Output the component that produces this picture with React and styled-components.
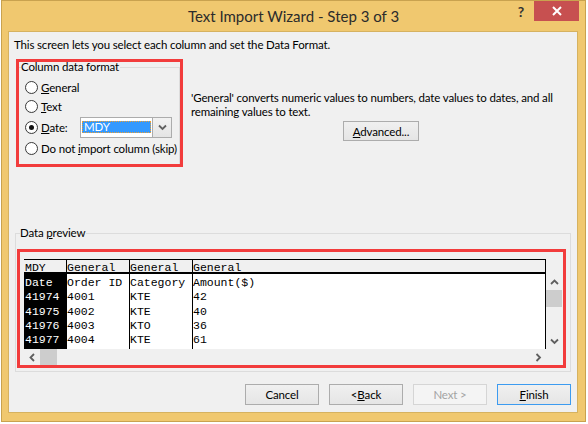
import React from "react";
import styled, { createGlobalStyle } from "styled-components";

const UI_FONT = `"Segoe UI", Lato, "Liberation Sans", sans-serif`;
const MONO = `"Courier New", "Liberation Mono", monospace`;

const GlobalStyle = createGlobalStyle`
  * { box-sizing: border-box; }
  html, body { margin: 0; padding: 0; }
  body {
    width: 588px;
    height: 424px;
    overflow: hidden;
    background: #fff;
    font-family: ${UI_FONT};
    font-size: 11.5px;
    letter-spacing: -0.15px;
    color: #000;
  }
`;

const Window = styled.div`
  width: 585px;
  height: 422px;
  margin-left: 1px;
  background: #f0c86f;
  border: 1px solid #c9a24f;
  display: flex;
  flex-direction: column;
`;

const TitleBar = styled.div`
  height: 30px;
  flex: none;
  display: grid;
  grid-template-columns: 1fr auto 1fr;
  align-items: start;
`;

const Title = styled.div`
  grid-column: 2;
  line-height: 30px;
  font-size: 15px;
  letter-spacing: 0;
  color: #2b2b2b;
  white-space: nowrap;
`;

const Controls = styled.div`
  grid-column: 3;
  justify-self: end;
  display: flex;
  align-items: flex-start;
  margin-right: 6px;
`;

const HelpGlyph = styled.span`
  font-weight: bold;
  font-size: 14px;
  line-height: 22px;
  color: #333;
  margin-right: 10px;
`;

const CloseButton = styled.div`
  width: 45px;
  height: 20px;
  background: #c75050;
  display: flex;
  align-items: center;
  justify-content: center;
`;

const Panel = styled.div`
  flex: 1;
  margin: 0 7px 8px 6px;
  background: #f0f0f0;
  border: 1px solid #d6b260;
  display: flex;
  flex-direction: column;
`;

const Intro = styled.div`
  margin: 5px 0 0 5px;
  line-height: 15px;
`;

const Middle = styled.div`
  display: flex;
  margin: 7px 0 0 7px;
  height: 108px;
`;

const Highlight = styled.div`
  border: 3px solid #f23c3c;
  flex: none;
`;

const FormatHighlight = styled(Highlight)`
  width: 167px;
  height: 108px;
`;

const FormatGroup = styled.fieldset`
  margin: 0;
  padding: 0 0 0 2px;
  min-width: 0;
  height: 100%;
  border: 1px solid #dcdcdc;
  border-left: 0;
  border-bottom: 0;
`;

const Legend = styled.legend`
  padding: 0 1px 0 0;
  margin-left: ${(p) => p.$indent || 0}px;
  line-height: ${(p) => p.$lh || 12}px;
`;

const OptionList = styled.div`
  margin: 6px 0 0 4px;
  display: flex;
  flex-direction: column;
`;

const OptionRow = styled.div`
  display: flex;
  align-items: center;
  gap: 3px;
  height: ${(p) => (p.$tall ? 23 : 19)}px;
  white-space: nowrap;
`;

const Radio = styled.span`
  width: 13px;
  height: 13px;
  flex: none;
  border-radius: 50%;
  border: 1px solid #3a3a3a;
  background: radial-gradient(circle at 50% 40%, #fff 55%, #ececec);
  display: inline-flex;
  align-items: center;
  justify-content: center;

  &::after {
    content: "";
    width: 5px;
    height: 5px;
    border-radius: 50%;
    background: ${(p) => (p.$checked ? "#111" : "transparent")};
  }
`;

const DateLabel = styled.span`
  width: 36px;
`;

const Combo = styled.div`
  width: 92px;
  height: 21px;
  border: 1px solid #acacac;
  background: #fff;
  display: flex;
`;

const ComboField = styled.div`
  flex: 1;
  padding: 3px 1px 4px 1px;
`;

const ComboValue = styled.div`
  height: 12px;
  line-height: 12px;
  padding-left: 2px;
  background: #3399ff;
  color: #fff;
  outline: 1px dotted #f0a030;
  outline-offset: -1px;
`;

const ComboButton = styled.div`
  width: 19px;
  border-left: 1px solid #acacac;
  background: linear-gradient(#f2f2f2, #e4e4e4);
  display: flex;
  align-items: center;
  justify-content: center;
`;

const Description = styled.div`
  width: 380px;
  margin-left: 8px;
  display: flex;
  flex-direction: column;
`;

const DescText = styled.p`
  margin: 32px 0 0;
  line-height: 14px;
`;

const PushButton = styled.div`
  width: ${(p) => p.$w || 74}px;
  height: ${(p) => p.$h || 21}px;
  border: 1px solid ${(p) => (p.$default ? "#3c9bf0" : p.$disabled ? "#d5d5d5" : "#acacac")};
  background: ${(p) => (p.$disabled ? "#f4f4f4" : "linear-gradient(#f0f0f0, #e5e5e5)")};
  color: ${(p) => (p.$disabled ? "#a3a3a3" : "#000")};
  display: flex;
  align-items: center;
  justify-content: center;
  white-space: nowrap;
`;

const AdvancedButton = styled(PushButton)`
  margin-top: 2px;
  align-self: center;
`;

const PreviewGroup = styled.fieldset`
  margin: 60px 0 0 6px;
  width: 556px;
  min-width: 0;
  padding: 10px 4px 3px 1px;
  border: 1px solid #dcdcdc;
`;

const PreviewHighlight = styled(Highlight)`
  width: 549px;
  height: 119px;
`;

const Grid = styled.div`
  margin: 7px 1px 0 4px;
  height: 106px;
  display: grid;
  grid-template-columns: 522px 16px;
  grid-template-rows: 15px 75px 16px;
  font-family: ${MONO};
  font-size: 11.5px;
  letter-spacing: 0;
`;

const Columns = styled.div`
  grid-row: 1 / span 2;
  grid-column: 1;
  display: flex;
`;

const Column = styled.div`
  width: ${(p) => p.$w}px;
  flex: none;
  display: flex;
  flex-direction: column;
  border-left: ${(p) => (p.$first ? "0" : "1px solid #000")};
  border-right: ${(p) => (p.$last ? "1px solid #000" : "0")};
`;

const HeaderCell = styled.div`
  height: 15px;
  flex: none;
  border-top: 1px solid #000;
  border-bottom: 2px solid #000;
  background: #f0f0f0;
  padding: 2px 0 0 ${(p) => (p.$first ? 1 : 0)}px;
  line-height: 12px;
  white-space: pre;
`;

const BodyCells = styled.div`
  flex: 1;
  padding: 2px 0 0 ${(p) => (p.$selected ? 1 : 0)}px;
  background: ${(p) => (p.$selected ? "#000" : "#fff")};
  color: ${(p) => (p.$selected ? "#fff" : "#000")};
`;

const Cell = styled.div`
  line-height: 14.25px;
  white-space: pre;
`;

const VScroll = styled.div`
  grid-row: 2;
  grid-column: 2;
  display: flex;
  flex-direction: column;
  background: #f0f0f0;
`;

const HScroll = styled.div`
  grid-row: 3;
  grid-column: 1;
  display: flex;
  background: #f0f0f0;
`;

const ArrowBox = styled.div`
  width: 16px;
  height: 16px;
  flex: none;
  display: flex;
  align-items: center;
  justify-content: center;
`;

const Track = styled.div`
  flex: 1;
  display: flex;
  flex-direction: ${(p) => (p.$vertical ? "column" : "row")};
`;

const Thumb = styled.div`
  background: #cdcdcd;
  width: ${(p) => (p.$vertical ? "100%" : "17px")};
  height: ${(p) => (p.$vertical ? "17px" : "100%")};
`;

const ButtonRow = styled.div`
  display: flex;
  justify-content: flex-end;
  gap: 10px;
  margin: 12px 6px 0 0;
`;

const Chevron = ({ dir, color = "#5f5f5f" }) => {
  const pts = {
    up: "1,6 4.5,2.5 8,6",
    down: "1,2.5 4.5,6 8,2.5",
    left: "6,1 2.5,4.5 6,8",
    right: "2.5,1 6,4.5 2.5,8",
  }[dir];
  return (
    <svg width="9" height="9" viewBox="0 0 9 9">
      <polyline points={pts} fill="none" stroke={color} strokeWidth="1.8" />
    </svg>
  );
};

const columns = [
  { w: 42, head: "MDY", cells: ["Date", "41974", "41975", "41976", "41977"], selected: true },
  { w: 63, head: "General", cells: ["Order ID", "4001", "4002", "4003", "4004"] },
  { w: 63, head: "General", cells: ["Category", "KTE", "KTE", "KTO", "KTE"] },
  { w: 354, head: "General", cells: ["Amount($)", "42", "40", "36", "61"] },
];

export default function App() {
  return (
    <>
      <GlobalStyle />
      <Window>
        <TitleBar>
          <Title>Text Import Wizard - Step 3 of 3</Title>
          <Controls>
            <HelpGlyph>?</HelpGlyph>
            <CloseButton>
              <svg width="10" height="10" viewBox="0 0 10 10">
                <path d="M1 1L9 9M9 1L1 9" stroke="#fff" strokeWidth="2" />
              </svg>
            </CloseButton>
          </Controls>
        </TitleBar>

        <Panel>
          <Intro>This screen lets you select each column and set the Data Format.</Intro>

          <Middle>
            <FormatHighlight>
              <FormatGroup>
                <Legend $lh={10}>Column data format</Legend>
                <OptionList>
                  <OptionRow>
                    <Radio />
                    <span><u>G</u>eneral</span>
                  </OptionRow>
                  <OptionRow>
                    <Radio />
                    <span><u>T</u>ext</span>
                  </OptionRow>
                  <OptionRow $tall>
                    <Radio $checked />
                    <DateLabel><u>D</u>ate:</DateLabel>
                    <Combo>
                      <ComboField>
                        <ComboValue>MDY</ComboValue>
                      </ComboField>
                      <ComboButton>
                        <Chevron dir="down" color="#606060" />
                      </ComboButton>
                    </Combo>
                  </OptionRow>
                  <OptionRow>
                    <Radio />
                    <span>Do not <u>i</u>mport column (skip)</span>
                  </OptionRow>
                </OptionList>
              </FormatGroup>
            </FormatHighlight>

            <Description>
              <DescText>
                'General' converts numeric values to numbers, date values to dates, and all
                remaining values to text.
              </DescText>
              <AdvancedButton $w={76} $h={20}>
                <span><u>A</u>dvanced...</span>
              </AdvancedButton>
            </Description>
          </Middle>

          <PreviewGroup>
            <Legend $indent={3}>Data <u>p</u>review</Legend>
            <PreviewHighlight>
              <Grid>
                <Columns>
                  {columns.map((col, i) => (
                    <Column
                      key={i}
                      $w={col.w}
                      $first={i === 0}
                      $last={i === columns.length - 1}
                    >
                      <HeaderCell $first={i === 0}>{col.head}</HeaderCell>
                      <BodyCells $selected={col.selected}>
                        {col.cells.map((c, j) => (
                          <Cell key={j}>{c}</Cell>
                        ))}
                      </BodyCells>
                    </Column>
                  ))}
                </Columns>
                <VScroll>
                  <ArrowBox><Chevron dir="up" /></ArrowBox>
                  <Track $vertical>
                    <Thumb $vertical />
                  </Track>
                  <ArrowBox><Chevron dir="down" /></ArrowBox>
                </VScroll>
                <HScroll>
                  <ArrowBox><Chevron dir="left" /></ArrowBox>
                  <Track>
                    <Thumb />
                  </Track>
                  <ArrowBox><Chevron dir="right" /></ArrowBox>
                </HScroll>
              </Grid>
            </PreviewHighlight>
          </PreviewGroup>

          <ButtonRow>
            <PushButton>Cancel</PushButton>
            <PushButton>&lt; <u>B</u>ack</PushButton>
            <PushButton $disabled>Next &gt;</PushButton>
            <PushButton $default><span><u>F</u>inish</span></PushButton>
          </ButtonRow>
        </Panel>
      </Window>
    </>
  );
}
